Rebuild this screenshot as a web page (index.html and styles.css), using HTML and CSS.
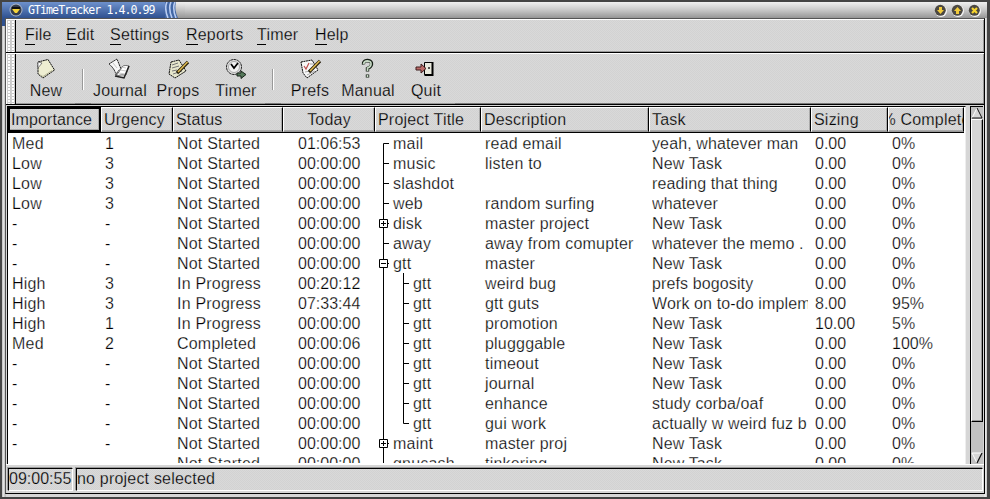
FILE: index.html
```html
<!DOCTYPE html>
<html lang="en">
<head>
<meta charset="utf-8">
<title>GTimeTracker 1.4.0.99</title>
<link rel="stylesheet" href="styles.css">
</head>
<body>
<div class="window">
  <header class="titlebar">
    <div class="caption">
      <svg class="orb" width="14" height="14" viewBox="0 0 14 14"><circle cx="7" cy="7" r="6.5" fill="#a9b5c9"/><circle cx="7" cy="7" r="5.5" fill="#333b4b"/><path d="M3 4h8v3h-8z" fill="#111"/><path d="M3 6h8L8 10H6z" fill="#f5d33a"/></svg>
      <span class="caption-text">GTimeTracker 1.4.0.99</span>
    </div>
    <svg class="curves" width="20" height="16" viewBox="0 0 20 16"><path d="M0 0H14Q16 8 18 16H0z" fill="#4267a5"/><path d="M2 0Q-1 6 3 16M6 0Q3 6 7 16M10 0Q7 6 11 16" fill="none" stroke="#b9cdf2" stroke-width="1.6"/><path d="M11 0Q9 8 13 16h7V0z" fill="url(#tg)"/><defs><linearGradient id="tg" x2="0" y2="1"><stop stop-color="#f0f0f0"/><stop offset="1" stop-color="#969696"/></linearGradient></defs></svg>
    <div class="controls">
      <svg width="13" height="13" viewBox="0 0 13 13"><circle cx="7" cy="7" r="6" fill="#f4f4f4"/><circle cx="6.3" cy="6.3" r="5.5" fill="#4b4842"/><path d="M5 3h3v3h2L6.5 10 3 6h2z" fill="#f1cb3c"/></svg>
      <svg width="13" height="13" viewBox="0 0 13 13"><circle cx="7" cy="7" r="6" fill="#f4f4f4"/><circle cx="6.3" cy="6.3" r="5.5" fill="#4b4842"/><path d="M5 10h3V7h2L6.5 3 3 7h2z" fill="#f1cb3c"/></svg>
      <svg width="13" height="13" viewBox="0 0 13 13"><circle cx="7" cy="7" r="6" fill="#f4f4f4"/><circle cx="6.3" cy="6.3" r="5.5" fill="#4b4842"/><path d="M4 4l5 5M9 4l-5 5" stroke="#f7d52f" stroke-width="2.2"/></svg>
    </div>
  </header>
  <div class="frame">
    <div class="bar menubar">
      <div class="grip"></div>
      <nav class="menus"><span class="m-file"><u>F</u>ile</span><span class="m-edit"><u>E</u>dit</span><span class="m-settings"><u>S</u>ettings</span><span class="m-reports"><u>R</u>eports</span><span class="m-timer"><u>T</u>imer</span><span><u>H</u>elp</span></nav>
    </div>
    <div class="bar toolbar">
      <div class="grip"></div>
      <div class="tool first"><svg width="24" height="24" viewBox="0 0 24 24"><path d="M4 5L14 2.500L20.500 13L9 21L4 17Z" fill="#eeeed2" stroke="#111" stroke-dasharray="2 .5"/><path d="M4 5l4 1-4 5z" fill="#fff" stroke="#555" stroke-width=".7"/><path d="M6 18l3 1.500 9-6" fill="none" stroke="#b7b798"/></svg><span>New</span></div>
      <div class="split"></div>
      <div class="tool"><svg width="24" height="24" viewBox="0 0 24 24"><path d="M1 7L9 2L13 12Q10 13 8 18Q7 12 1 7Z" fill="#f7f7f7" stroke="#222" stroke-dasharray="2 .5"/><path d="M13 12Q14 7 21 9L18 18Q14 17 8 19Z" fill="#fff" stroke="#555" stroke-width=".8"/><path d="M7 19l9 2 5-12" fill="none" stroke="#222" stroke-width="1.500"/><path d="M13 10l5 1M12 13l6 1M11 16l6 1M5 6l4 5" stroke="#bbb" stroke-width=".8"/></svg><span>Journal</span></div>
      <div class="tool"><svg width="24" height="24" viewBox="0 0 24 24"><path d="M5 5L13 3L20 14L9 21L3 17Z" fill="#e6e6cc" stroke="#111" stroke-dasharray="2 .5"/><path d="M6 8l6-2M6 11l7-2M6 14l5-1M7 17l9-3" stroke="#777"/><path d="M22 5L11 16" stroke="#231b08" stroke-width="3.200"/><path d="M21.500 5L12 15" stroke="#dfbb52" stroke-width="1.600"/></svg><span>Props</span></div>
      <div class="tool"><svg width="24" height="24" viewBox="0 0 24 24"><circle cx="10" cy="10" r="7.500" fill="#ddd" stroke="#222" stroke-dasharray="2.500 .4"/><circle cx="10" cy="10" r="5.500" fill="#f2f2f2" stroke="#aaa"/><path d="M7 7l3 4 4-5" fill="none" stroke="#000" stroke-width="1.700"/><path d="M13 16h4v-2l5 3.500-5 4v-2.500h-4z" fill="#55785a" stroke="#18251a"/></svg><span>Timer</span></div>
      <div class="split"></div>
      <div class="tool"><svg width="24" height="24" viewBox="0 0 24 24"><path d="M3 5L14 3L20 13L9 21L5 16Z" fill="#f7f7f7" stroke="#111" stroke-dasharray="2 .5"/><path d="M6 9l2 3 3-6" fill="none" stroke="#bc4d4d" stroke-width="1.200"/><path d="M12 7h4M7 15l5-1M9 18l8-4" stroke="#aaa"/><path d="M22 4L11 15" stroke="#231b08" stroke-width="3.200"/><path d="M21.500 4L12 14" stroke="#dfbb52" stroke-width="1.600"/></svg><span>Prefs</span></div>
      <div class="tool"><svg width="24" height="24" viewBox="0 0 24 24"><path d="M7.500 7.500Q7 4 11.500 3.500Q16 4 15.500 7.500Q15 10 11.500 11.500V14.500M11.500 17.500v3" fill="none" stroke="#172017" stroke-width="3.400"/><path d="M7.500 7Q8 4 11.500 3.800Q15.500 4 15 7.500Q14.500 10 11.500 11V14M11.500 18v2" fill="none" stroke="#c6d9c4" stroke-width="1.700"/></svg><span>Manual</span></div>
      <div class="tool"><svg width="24" height="24" viewBox="0 0 24 24"><path d="M10.500 5.500h8v12h-8z" fill="#e9e9dd" stroke="#000"/><path d="M18.500 5v13h-8" fill="none" stroke="#000" stroke-width="2"/><circle cx="15" cy="11" r="1" fill="#222"/><path d="M2 10h5V7l5 4.500L7 16v-3H2z" fill="#bc6b68" stroke="#3e1e1e"/></svg><span>Quit</span></div>
      <div class="tail"></div>
    </div>
    <main class="content">
      <div class="table">
        <div class="head grid"><div class="focused">Importance</div><div>Urgency</div><div>Status</div><div class="center">Today</div><div>Project Title</div><div>Description</div><div>Task</div><div>Sizing</div><div class="last">% Complete</div></div>
        <div class="rows" id="rows"></div>
      </div>
      <div class="scrollbar">
        <svg width="12" height="12" viewBox="0 0 12 12"><path d="M6 1L1 11h10z" fill="#d6d6d6"/><path d="M6 1L1 11" stroke="#fff"/><path d="M6 1l5 10H1" fill="none" stroke="#111"/></svg>
        <div class="thumb"></div>
        <svg class="down" width="12" height="12" viewBox="0 0 12 12"><path d="M1 1h10L6 11z" fill="#d6d6d6"/><path d="M11 1H1l5 10" fill="none" stroke="#fff"/><path d="M11 1L6 11" stroke="#111" stroke-width="1.300"/></svg>
      </div>
    </main>
    <footer class="status"><div class="clock">09:00:55</div><div class="message">no project selected</div></footer>
  </div>
</div>
<script src="rows.js"></script>
</body>
</html>
```
FILE: rows.js
```javascript
// importance | urgency | status | today | tree node | title | description | task | sizing | complete
const data = `Med|1|Not Started|01:06:53|first|mail|read email|yeah, whatever man|0.00|0%
Low|3|Not Started|00:00:00|leaf|music|listen to|New Task|0.00|0%
Low|3|Not Started|00:00:00|leaf|slashdot||reading that thing|0.00|0%
Low|3|Not Started|00:00:00|leaf|web|random surfing|whatever|0.00|0%
-|-|Not Started|00:00:00|plus|disk|master project|New Task|0.00|0%
-|-|Not Started|00:00:00|leaf|away|away from comupter|whatever the memo .|0.00|0%
-|-|Not Started|00:00:00|minus|gtt|master|New Task|0.00|0%
High|3|In Progress|00:20:12|child|gtt|weird bug|prefs bogosity|0.00|0%
High|3|In Progress|07:33:44|child|gtt|gtt guts|Work on to-do implem|8.00|95%
High|1|In Progress|00:00:00|child|gtt|promotion|New Task|10.00|5%
Med|2|Completed|00:00:06|child|gtt|plugggable|New Task|0.00|100%
-|-|Not Started|00:00:00|child|gtt|timeout|New Task|0.00|0%
-|-|Not Started|00:00:00|child|gtt|journal|New Task|0.00|0%
-|-|Not Started|00:00:00|child|gtt|enhance|study corba/oaf|0.00|0%
-|-|Not Started|00:00:00|end|gtt|gui work|actually w weird fuz b|0.00|0%
-|-|Not Started|00:00:00|plus|maint|master proj|New Task|0.00|0%
||Not Started|00:00:00|leaf|gnucash|tinkering|New Task|0.00|0%`;

const box = 'M4.500 6.500h8v8h-8z';
const paths = {
  first: 'M14 10.500H8.500V20',
  leaf: 'M8.500 0V20M8.500 10.500H14',
  plus: `M8.500 0V6M8.500 15V20M12 10.500H14M6 10.500h5M8.500 8v5${box}`,
  minus: `M8.500 0V6M8.500 15V20M12 10.500H14M6 10.500h5${box}`,
  child: 'M8.500 0V20M28.500 0V20M28.500 10.500H34',
  end: 'M8.500 0V20M28.500 0V10.500H34'
};

document.getElementById('rows').innerHTML = data.split('\n').map(line => {
  const c = line.split('|');
  const nested = c[4] === 'child' || c[4] === 'end';
  const w = nested ? 38 : 18;
  const tree = `<svg width="${w}" height="20" viewBox="0 0 ${w} 20"><path d="${paths[c[4]]}"/></svg>`;
  return `<div class="row grid"><div>${c[0]}</div><div>${c[1]}</div><div>${c[2]}</div><div class="time">${c[3]}</div><div class="node">${tree}${c[5]}</div><div>${c[6]}</div><div class="task">${c[7]}</div><div class="num">${c[8]}</div><div class="num">${c[9]}</div></div>`;
}).join('');
```
FILE: styles.css
```css
* { box-sizing: border-box; }
body { margin: 0; width: 990px; height: 499px; overflow: hidden; font: 16px/20px "Liberation Sans", Arial, sans-serif; letter-spacing: .2px; color: #000; white-space: nowrap; -webkit-text-stroke: .25px #d6d6d6; }
svg { display: block; flex: none; }
.window { height: 499px; display: flex; flex-direction: column; padding: 0 5px 3px; background: linear-gradient(90deg, #464646 2px, #bfbfbf 2px, #ececec 4px, #aaa 5px, #d6d6d6 6px, #d6d6d6 984px, #f2f2f2 985px, #c4c4c4 987px, #444 987px); border-top: 2px solid #444; border-bottom: 2px solid #444; }
.titlebar { height: 16px; flex: none; margin: 0 -2px 0 -3px; display: flex; align-items: center; background: linear-gradient(#f0f0f0, #c8c8c8 50%, #969696); -webkit-text-stroke: 0; }
.caption { width: 163px; height: 24px; align-self: flex-start; flex: none; display: flex; align-items: flex-start; padding-left: 7px; gap: 5px; background: linear-gradient(#6e91cc, #2f5190 16px); }
.orb { margin-top: 1px; }
.caption-text { font: 11.6px/16px "DejaVu Sans Mono", monospace; letter-spacing: -.95px; color: #fff; }
.controls { margin-left: auto; margin-right: 6px; display: flex; gap: 4px; }
.frame { position: relative; flex: 1; min-height: 0; display: flex; flex-direction: column; border: 1px solid #000; border-top-color: #555; border-left-color: #555; background: #d6d6d6; }
.bar { display: flex; flex: none; border-top: 1px solid #fff; border-bottom: 1px solid #000; box-shadow: inset 0 -1px #999, inset -1px 0 #999; background: conic-gradient(#d9d9d9 25%, #d2d2d2 0 50%, #d9d9d9 0 75%, #d2d2d2 0) 0 0 / 2px 2px; }
.grip { width: 10px; flex: none; border-left: 1px solid #fff; border-right: 1px solid #000; background: radial-gradient(circle at 1px 1px, #fff 0 .8px, #aaa 1px 1.5px, transparent 1.6px) 1px 1px / 4px 3px, #d0d0d0; }
.menubar { height: 34px; }
.toolbar { height: 52px; }
.menus { display: flex; padding: 5px 0 0 9px; }
.menus u { text-decoration: none; border-bottom: 1px solid #000; padding-bottom: 1px; }
.m-file { width: 41px; }
.m-edit { width: 44px; }
.m-settings { width: 76px; }
.m-reports { width: 71px; }
.m-timer { width: 58px; }
.tool { width: 58px; flex: none; display: flex; flex-direction: column; align-items: center; padding-top: 3px; }
.tool.first { margin-left: 1px; }
.split { width: 16px; padding: 15px 0 0 7px; border-bottom: 1px solid #777; }
.split::before { content: ""; display: block; width: 2px; height: 21px; background: linear-gradient(90deg, #999 50%, #fff 50%); }
.tail { flex: 1; border-bottom: 1px solid #777; }
.content { display: flex; flex: none; height: 359px; margin-top: 1px; border-bottom: 1px solid #fff; }
.table { width: 959px; margin-left: 1px; border-left: 1px solid #000; border-top: 1px solid #000; background: #fff; border-right: 1px solid #eee; overflow: hidden; }
.grid { display: grid; grid-template-columns: 93px 72px 110px 92px 106px 168px 162px 77px 76px; }
.grid > div { overflow: hidden; }
.head { width: 956px; height: 26px; border-bottom: 1px solid #000; }
.head div { padding: 2px 0 0 2px; border: 1px solid; border-color: #fff #000 #999 #fff; box-shadow: inset -1px -1px #aaa; background: conic-gradient(#d9d9d9 25%, #d2d2d2 0 50%, #d9d9d9 0 75%, #d2d2d2 0) 0 0 / 2px 2px; }
.head .focused { padding: 1px 0 0 1px; border: 2px solid #000; letter-spacing: .1px; }
.head .center { text-align: center; padding-left: 0; }
.head .last { display: flex; justify-content: center; padding: 2px 0 0; }
.row { height: 20px; }
.row div { padding-left: 4px; line-height: 22px; height: 20px; }
.row .task { padding: 0 3px; overflow: clip; overflow-clip-margin: content-box; letter-spacing: .12px; }
.row .time { padding-left: 15px; letter-spacing: 0; }
.row .num { letter-spacing: 0; }
.row .node { display: flex; padding-left: 0; }
.node path { fill: none; stroke: #000; stroke-width: 1; }
.rows { height: 330px; overflow: hidden; -webkit-text-stroke: .25px #fff; }
.scrollbar { width: 13px; margin-left: 4px; border-left: 1px solid #000; border-top: 1px solid #000; background: #c1c1c1; display: flex; flex-direction: column; }
.thumb { height: 303px; border: 1px solid; border-color: #fff #000 #000 #fff; box-shadow: inset -1px -1px #999; background: #d6d6d6; }
.down { margin-top: auto; }
.status { display: flex; gap: 3px; padding: 3px 1px 0 2px; }
.status div { height: 23px; border: 1px solid; border-color: #000 #fff #fff #000; box-shadow: -1px -1px #999; background: conic-gradient(#d9d9d9 25%, #d2d2d2 0 50%, #d9d9d9 0 75%, #d2d2d2 0) 0 0 / 2px 2px; }
.clock { width: 65px; letter-spacing: 0; }
.message { flex: 1; }
```
